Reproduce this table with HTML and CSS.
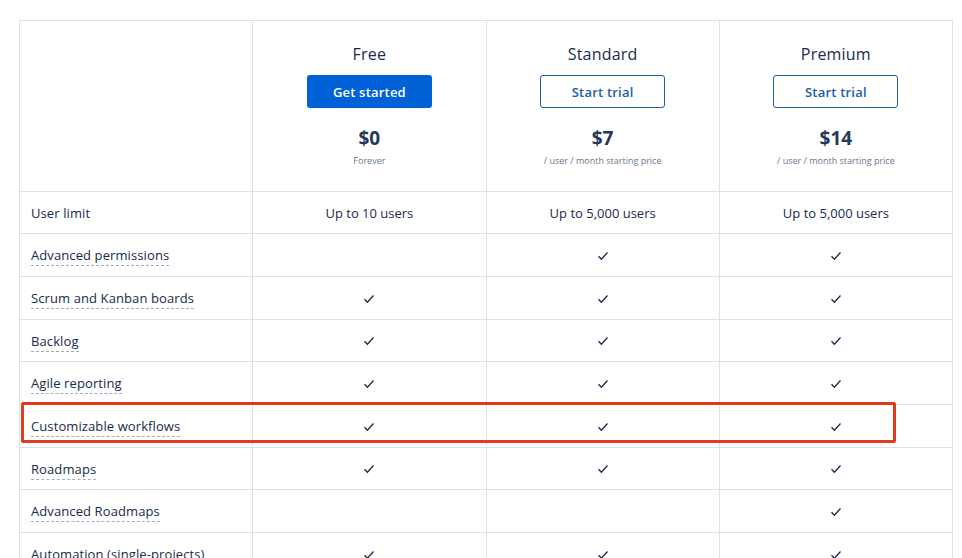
FILE: index.html
```html
<!DOCTYPE html>
<html>
<head>
<meta charset="utf-8">
<link rel="stylesheet" href="styles.css">
</head>
<body>
<div class="wrap">
  <table class="cmp">
    <tr class="head">
      <td class="label"></td>
      <td>
        <div class="plan">Free</div>
        <a class="btn primary">Get started</a>
        <div class="price">$0</div>
        <div class="sub">Forever</div>
      </td>
      <td>
        <div class="plan">Standard</div>
        <a class="btn outline">Start trial</a>
        <div class="price">$7</div>
        <div class="sub">/ user / month starting price</div>
      </td>
      <td>
        <div class="plan">Premium</div>
        <a class="btn outline">Start trial</a>
        <div class="price">$14</div>
        <div class="sub">/ user / month starting price</div>
      </td>
    </tr>
    <tr class="s">
      <td class="label"><span class="plain">User limit</span></td>
      <td>Up to 10 users</td>
      <td>Up to 5,000 users</td>
      <td>Up to 5,000 users</td>
    </tr>
    <tr>
      <td class="label"><span>Advanced permissions</span></td>
      <td></td>
      <td><svg class="chk" viewBox="0 0 12 10"><path d="M1.5 5.2 L4.4 8.2 L10.5 1.5"/></svg></td>
      <td><svg class="chk" viewBox="0 0 12 10"><path d="M1.5 5.2 L4.4 8.2 L10.5 1.5"/></svg></td>
    </tr>
    <tr>
      <td class="label"><span>Scrum and Kanban boards</span></td>
      <td><svg class="chk" viewBox="0 0 12 10"><path d="M1.5 5.2 L4.4 8.2 L10.5 1.5"/></svg></td>
      <td><svg class="chk" viewBox="0 0 12 10"><path d="M1.5 5.2 L4.4 8.2 L10.5 1.5"/></svg></td>
      <td><svg class="chk" viewBox="0 0 12 10"><path d="M1.5 5.2 L4.4 8.2 L10.5 1.5"/></svg></td>
    </tr>
    <tr class="s">
      <td class="label"><span>Backlog</span></td>
      <td><svg class="chk" viewBox="0 0 12 10"><path d="M1.5 5.2 L4.4 8.2 L10.5 1.5"/></svg></td>
      <td><svg class="chk" viewBox="0 0 12 10"><path d="M1.5 5.2 L4.4 8.2 L10.5 1.5"/></svg></td>
      <td><svg class="chk" viewBox="0 0 12 10"><path d="M1.5 5.2 L4.4 8.2 L10.5 1.5"/></svg></td>
    </tr>
    <tr>
      <td class="label"><span>Agile reporting</span></td>
      <td><svg class="chk" viewBox="0 0 12 10"><path d="M1.5 5.2 L4.4 8.2 L10.5 1.5"/></svg></td>
      <td><svg class="chk" viewBox="0 0 12 10"><path d="M1.5 5.2 L4.4 8.2 L10.5 1.5"/></svg></td>
      <td><svg class="chk" viewBox="0 0 12 10"><path d="M1.5 5.2 L4.4 8.2 L10.5 1.5"/></svg></td>
    </tr>
    <tr>
      <td class="label"><span>Customizable workflows</span></td>
      <td><svg class="chk" viewBox="0 0 12 10"><path d="M1.5 5.2 L4.4 8.2 L10.5 1.5"/></svg></td>
      <td><svg class="chk" viewBox="0 0 12 10"><path d="M1.5 5.2 L4.4 8.2 L10.5 1.5"/></svg></td>
      <td><svg class="chk" viewBox="0 0 12 10"><path d="M1.5 5.2 L4.4 8.2 L10.5 1.5"/></svg></td>
    </tr>
    <tr class="s">
      <td class="label"><span>Roadmaps</span></td>
      <td><svg class="chk" viewBox="0 0 12 10"><path d="M1.5 5.2 L4.4 8.2 L10.5 1.5"/></svg></td>
      <td><svg class="chk" viewBox="0 0 12 10"><path d="M1.5 5.2 L4.4 8.2 L10.5 1.5"/></svg></td>
      <td><svg class="chk" viewBox="0 0 12 10"><path d="M1.5 5.2 L4.4 8.2 L10.5 1.5"/></svg></td>
    </tr>
    <tr>
      <td class="label"><span>Advanced Roadmaps</span></td>
      <td></td>
      <td></td>
      <td><svg class="chk" viewBox="0 0 12 10"><path d="M1.5 5.2 L4.4 8.2 L10.5 1.5"/></svg></td>
    </tr>
    <tr>
      <td class="label"><span>Automation (single-projects)</span></td>
      <td><svg class="chk" viewBox="0 0 12 10"><path d="M1.5 5.2 L4.4 8.2 L10.5 1.5"/></svg></td>
      <td><svg class="chk" viewBox="0 0 12 10"><path d="M1.5 5.2 L4.4 8.2 L10.5 1.5"/></svg></td>
      <td><svg class="chk" viewBox="0 0 12 10"><path d="M1.5 5.2 L4.4 8.2 L10.5 1.5"/></svg></td>
    </tr>
  </table>
  <div class="highlight"></div>
</div>
</body>
</html>
```

FILE: styles.css
```css
html, body {
  margin: 0;
  padding: 0;
  background: #fff;
  overflow: hidden;
}
body {
  font-family: "Open Sans", "Noto Sans", sans-serif;
  color: #172b4d;
  height: 558px;
}
.wrap {
  position: relative;
  padding: 20px 0 0 19px;
}
.cmp {
  border-collapse: collapse;
  width: 934px;
  table-layout: fixed;
}
.cmp td {
  border: 1px solid #dfe1e6;
  text-align: center;
  vertical-align: middle;
  font-size: 13px;
  height: 42px;
  padding: 0;
  line-height: 16px;
}
.cmp tr.s td {
  height: 41px;
}
.cmp tr.head td {
  height: 170px;
  vertical-align: top;
}
.cmp td.label {
  text-align: left;
  padding-left: 11px;
}
.label span {
  border-bottom: 1px dashed #a5adba;
  padding-bottom: 1px;
  letter-spacing: 0.1px;
}
.label span.plain {
  border-bottom: none;
}
.plan {
  font-size: 16px;
  line-height: 20px;
  margin-top: 23px;
  letter-spacing: 0.2px;
}
.btn {
  display: flex;
  align-items: center;
  justify-content: center;
  box-sizing: border-box;
  width: 125px;
  height: 33px;
  margin: 11px auto 0;
  border-radius: 3px;
  font-size: 13px;
  font-weight: 600;
  letter-spacing: 0.2px;
}
.btn.primary {
  background: #0062d6;
  color: #fff;
}
.btn.outline {
  border: 1px solid #1d5ea8;
  color: #1d5ea8;
  background: #fff;
}
.price {
  font-size: 19px;
  font-weight: 700;
  line-height: 24px;
  margin-top: 18px;
  color: #253858;
}
.sub {
  font-size: 9px;
  line-height: 12px;
  margin-top: 5px;
  color: #6b778c;
}
.chk {
  width: 12px;
  height: 10px;
  display: inline-block;
  vertical-align: middle;
  margin-top: -2px;
}
.chk path {
  fill: none;
  stroke: #172b4d;
  stroke-width: 1.3;
}
.highlight {
  position: absolute;
  left: 21px;
  top: 402px;
  width: 869px;
  height: 35px;
  border: 3px solid #e2391f;
  border-radius: 2px;
}
```
